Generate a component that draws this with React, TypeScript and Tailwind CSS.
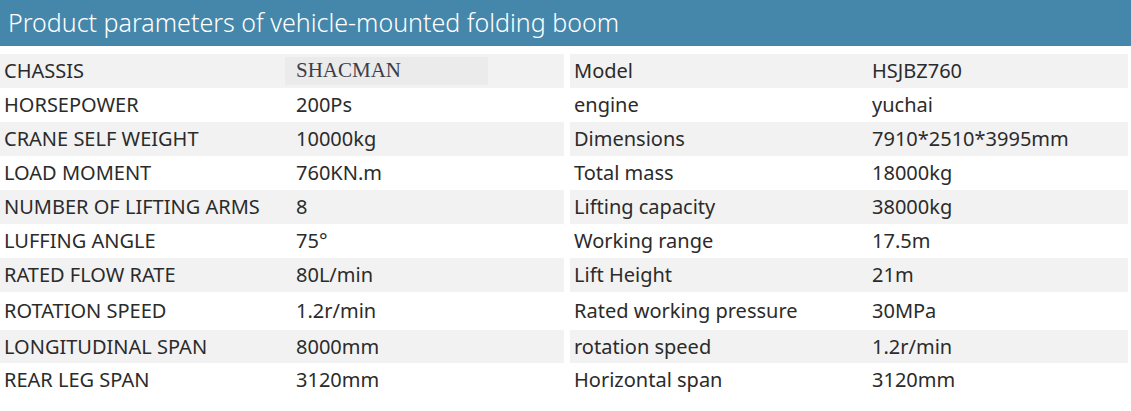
const left: [string, string][] = [
  ["CHASSIS", "SHACMAN"],
  ["HORSEPOWER", "200Ps"],
  ["CRANE SELF WEIGHT", "10000kg"],
  ["LOAD MOMENT", "760KN.m"],
  ["NUMBER OF LIFTING ARMS", "8"],
  ["LUFFING ANGLE", "75°"],
  ["RATED FLOW RATE", "80L/min"],
  ["ROTATION SPEED", "1.2r/min"],
  ["LONGITUDINAL SPAN", "8000mm"],
  ["REAR LEG SPAN", "3120mm"],
];

const right: [string, string][] = [
  ["Model", "HSJBZ760"],
  ["engine", "yuchai"],
  ["Dimensions", "7910*2510*3995mm"],
  ["Total mass", "18000kg"],
  ["Lifting capacity", "38000kg"],
  ["Working range", "17.5m"],
  ["Lift Height", "21m"],
  ["Rated working pressure", "30MPa"],
  ["rotation speed", "1.2r/min"],
  ["Horizontal span", "3120mm"],
];

// row heights taken from the screenshot (the lower rows are a little uneven)
const heights = [
  "h-[34px]", "h-[34px]", "h-[34px]", "h-[34px]", "h-[34px]",
  "h-[34px]", "h-[34px]", "h-[38px]", "h-[33px]", "h-[34px]",
];

function Table({
  rows,
  labelWidth,
  width,
  valuePad,
}: {
  rows: [string, string][];
  labelWidth: string;
  width: string;
  valuePad: string;
}) {
  return (
    <div className={`flex flex-col ${width}`}>
      {rows.map(([label, value], i) => (
        <div
          key={label}
          className={`flex items-center ${heights[i]} ${i % 2 === 0 ? "bg-[#f2f2f2]" : "bg-white"}`}
        >
          <div className={`${labelWidth} shrink-0 pl-[4px]`}>{label}</div>
          {value === "SHACMAN" ? (
            <div className="flex h-[28px] w-[203px] items-center bg-[#ebebeb] pl-[11px] font-['Liberation_Serif',serif] text-[21px] text-[#3a3f4a]">
              {value}
            </div>
          ) : (
            <div className={valuePad}>{value}</div>
          )}
        </div>
      ))}
    </div>
  );
}

export default function App() {
  return (
    <div className="h-[411px] w-[1131px] overflow-hidden bg-white font-['Noto_Sans',sans-serif] text-[20px] text-[#2b2b2b]">
      {/* Header */}
      <div className="flex h-[46px] items-center bg-[#4587aa] pl-[8px] text-[25px] font-light text-white">
        Product parameters of vehicle-mounted folding boom
      </div>

      {/* Tables */}
      <div className="mt-[8px] flex gap-[6px]">
        <Table rows={left} width="w-[564px]" labelWidth="w-[285px]" valuePad="pl-[11px]" />
        <Table rows={right} width="w-[558px]" labelWidth="w-[298px]" valuePad="pl-[4px]" />
      </div>
    </div>
  );
}
